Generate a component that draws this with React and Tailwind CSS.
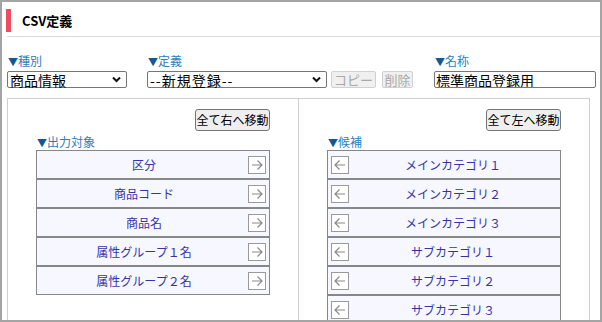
import React from "react";

const outputs = ["区分", "商品コード", "商品名", "属性グループ１名", "属性グループ２名"];
const candidates = [
  "メインカテゴリ１",
  "メインカテゴリ２",
  "メインカテゴリ３",
  "サブカテゴリ１",
  "サブカテゴリ２",
  "サブカテゴリ３",
];

function Arrow({ dir }) {
  return (
    <span className="w-[18px] h-[18px] border border-[#9a9a9a] bg-white flex items-center justify-center shrink-0">
      <svg width="14" height="14" viewBox="0 0 14 14" fill="none" stroke="#8a8a8a" strokeWidth="1.2">
        {dir === "right" ? (
          <path d="M2 7h10M7.5 2.5L12 7l-4.5 4.5" />
        ) : (
          <path d="M12 7H2M6.5 2.5L2 7l4.5 4.5" />
        )}
      </svg>
    </span>
  );
}

function Label({ children }) {
  return (
    <div className="text-[12px] leading-[16px] h-[16px] text-[#2c7dbd] whitespace-nowrap">
      <span className="text-[#0d5a95] text-[10px]">▼</span>
      {children}
    </div>
  );
}

function SelectBox({ width, value, spaced }) {
  return (
    <div
      role="combobox"
      className={`${width} h-[17px] border border-[#767676] rounded-[2px] bg-white flex items-center justify-between pl-[2px] pr-[5px]`}
    >
      <span
        className={`text-[14px] leading-none text-black whitespace-nowrap ${spaced ? "tracking-[1px]" : ""}`}
      >
        {value}
      </span>
      <svg width="9" height="7" viewBox="0 0 9 7" className="shrink-0">
        <path d="M1 1.5l3.5 3.5L8 1.5" stroke="#111" strokeWidth="2" fill="none" />
      </svg>
    </div>
  );
}

function Panel({ button, label, items, dir }) {
  return (
    <div className="flex-1 flex flex-col px-[28px] pt-[10px]">
      <div className="flex justify-end h-[22px]">
        <button className="w-[75px] h-[22px] border border-[#767676] rounded-[3px] bg-[#efefef] text-[12px] leading-none text-black">
          {button}
        </button>
      </div>
      <div className="mt-[3px] ml-[1px] h-[16px] flex items-center">
        <Label>{label}</Label>
      </div>
      <div className="flex flex-col">
        {items.map((t) => (
          <div
            key={t}
            className="h-[29px] border border-[#878787] bg-[#f7f7ff] flex items-center px-[3px]"
          >
            {dir === "left" && <Arrow dir="left" />}
            <span className="flex-1 text-center text-[12px] text-[#3434a8]">{t}</span>
            {dir === "right" && <Arrow dir="right" />}
          </div>
        ))}
      </div>
    </div>
  );
}

export default function App() {
  return (
    <div
      className="w-[602px] h-[322px] border-2 border-[#a4a4a4] bg-white overflow-hidden flex flex-col"
      style={{ fontFamily: '"Noto Sans CJK JP", "Noto Sans", sans-serif' }}
    >
      <div className="ml-[5px] h-[35px] pt-[7px] border-b border-[#dcdcdc] flex items-start shrink-0">
        <div className="-ml-[1px] w-[5px] h-[23px] bg-[#ee4c63]" />
        <div className="ml-[11px] mt-[3px] text-[13px] leading-[17px] font-bold text-black">CSV定義</div>
      </div>

      <div className="ml-[5px] mr-[2px] mt-[16px] h-[35px] flex items-start shrink-0">
        <div className="w-[140px] flex flex-col gap-[2px]">
          <div className="ml-[1px]">
            <Label>種別</Label>
          </div>
          <SelectBox width="w-[120px]" value="商品情報" />
        </div>
        <div className="w-[287px] flex flex-col gap-[2px]">
          <div className="ml-[1px]">
            <Label>定義</Label>
          </div>
          <div className="flex items-center h-[17px]">
            <SelectBox width="w-[180px]" value="--新規登録--" spaced />
            <button
              disabled
              className="ml-[4px] w-[45px] h-[17px] border border-[#d0d0d0] rounded-[2px] bg-[#f0f0f0] text-[13px] leading-none text-[#a9a9a9]"
            >
              コピー
            </button>
            <button
              disabled
              className="ml-[6px] w-[31px] h-[17px] border border-[#d0d0d0] rounded-[2px] bg-[#f0f0f0] text-[13px] leading-none text-[#a9a9a9]"
            >
              削除
            </button>
          </div>
        </div>
        <div className="flex-1 flex flex-col gap-[2px]">
          <div className="ml-[1px]">
            <Label>名称</Label>
          </div>
          <input
            defaultValue="標準商品登録用"
            className="block w-[162px] h-[17px] border border-[#767676] rounded-[2px] text-[14px] leading-[15px] px-[1px] py-0 text-black outline-none"
          />
        </div>
      </div>

      <div className="ml-[5px] w-[583px] mt-[10px] flex-1 border border-b-0 border-[#cfcfcf] flex">
        <Panel button="全て右へ移動" label="出力対象" items={outputs} dir="right" />
        <div className="w-px bg-[#cfcfcf]" />
        <Panel button="全て左へ移動" label="候補" items={candidates} dir="left" />
      </div>
    </div>
  );
}
